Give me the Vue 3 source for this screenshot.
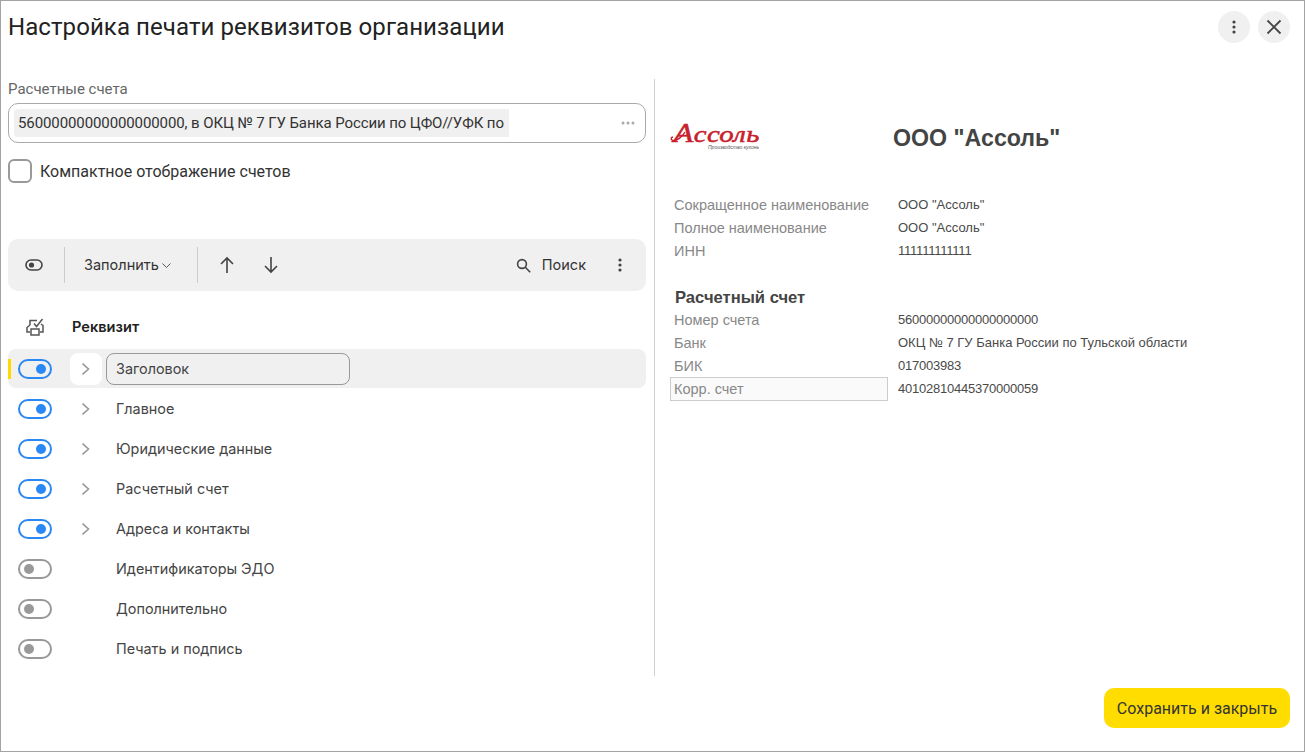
<script setup>
import { ref } from 'vue';

// Реквизиты организации
const rows = ref([
  { name: 'Заголовок', on: true, expand: true, current: true },
  { name: 'Главное', on: true, expand: true },
  { name: 'Юридические данные', on: true, expand: true },
  { name: 'Расчетный счет', on: true, expand: true },
  { name: 'Адреса и контакты', on: true, expand: true },
  { name: 'Идентификаторы ЭДО', on: false },
  { name: 'Дополнительно', on: false },
  { name: 'Печать и подпись', on: false }
]);

const orgInfo = [
  { label: 'Сокращенное наименование', value: 'ООО "Ассоль"' },
  { label: 'Полное наименование', value: 'ООО "Ассоль"' },
  { label: 'ИНН', value: '111111111111', digits: true }
];

const bankInfo = [
  { label: 'Номер счета', value: '56000000000000000000', digits: true },
  { label: 'Банк', value: 'ОКЦ № 7 ГУ Банка России по Тульской области' },
  { label: 'БИК', value: '017003983', digits: true },
  { label: 'Корр. счет', value: '40102810445370000059', digits: true, picked: true }
];
</script>

<template>
  <div class="window">
    <header class="head">
      <h1 class="title">Настройка печати реквизитов организации</h1>
      <div class="head-btns">
        <button class="round-btn" aria-label="Ещё">
          <svg width="16" height="16" viewBox="0 0 16 16"><circle cx="8" cy="3" r="1.6" /><circle cx="8" cy="8" r="1.6" /><circle cx="8" cy="13" r="1.6" /></svg>
        </button>
        <button class="round-btn" aria-label="Закрыть">
          <svg width="16" height="16" viewBox="0 0 16 16" fill="none" stroke="#444" stroke-width="1.8"><path d="M1.5 1.5 14.5 14.5M14.5 1.5 1.5 14.5" /></svg>
        </button>
      </div>
    </header>

    <div class="main">
      <section class="left">
        <div class="field-label">Расчетные счета</div>
        <div class="field">
          <div class="chip">56000000000000000000, в ОКЦ № 7 ГУ Банка России по ЦФО//УФК по</div>
          <svg class="more" width="14" height="4" viewBox="0 0 14 4"><circle cx="2" cy="2" r="1.5" /><circle cx="7" cy="2" r="1.5" /><circle cx="12" cy="2" r="1.5" /></svg>
        </div>
        <label class="check-line">
          <span class="check"></span>
          <span>Компактное отображение счетов</span>
        </label>

        <div class="toolbar">
          <span class="tb-eye">
            <svg width="18" height="12" viewBox="0 0 18 12"><rect x="1" y="1" width="16" height="10" rx="5" fill="none" stroke="#444" stroke-width="1.6" /><circle cx="6.5" cy="6" r="2.6" fill="#444" /></svg>
          </span>
          <span class="tb-sep"></span>
          <span class="tb-fill">
            Заполнить
            <svg width="9" height="5" viewBox="0 0 9 5" fill="none" stroke="#555" stroke-width="1"><path d="M.5.5 4.5 4.5 8.5.5" /></svg>
          </span>
          <span class="tb-sep"></span>
          <span class="tb-arrow">
            <svg width="16" height="18" viewBox="0 0 16 18" fill="none" stroke="#444" stroke-width="1.6"><path d="M8 17V2M2 8 8 2 14 8" /></svg>
          </span>
          <span class="tb-arrow">
            <svg width="16" height="18" viewBox="0 0 16 18" fill="none" stroke="#444" stroke-width="1.6"><path d="M8 1V16M2 10 8 16 14 10" /></svg>
          </span>
          <span class="tb-search">
            <svg width="15" height="15" viewBox="0 0 15 15" fill="none" stroke="#444" stroke-width="1.6"><circle cx="6" cy="6" r="4.4" /><path d="M9.3 9.3 14.2 14.2" /></svg>
            Поиск
          </span>
          <span class="tb-dots">
            <svg width="4" height="14" viewBox="0 0 4 14" fill="#444"><circle cx="2" cy="2" r="1.6" /><circle cx="2" cy="7" r="1.6" /><circle cx="2" cy="12" r="1.6" /></svg>
          </span>
        </div>

        <div class="list-head">
          <svg class="print-ico" width="18" height="18" viewBox="0 0 18 18" fill="none" stroke="#555" stroke-width="1.5">
            <path d="M4 7V2.5H11" />
            <path d="M4 14H1V9.5L4 7M14 14H17V7.5L15 6" />
            <path d="M5 11H13V17H5Z" />
            <path d="M8 5.5 10.5 8.5 16.5 1" />
          </svg>
          <span>Реквизит</span>
        </div>

        <div class="list">
          <div v-for="row in rows" :key="row.name" class="row" :class="{ current: row.current }">
            <span class="toggle" :class="{ on: row.on }"><i></i></span>
            <span class="expander">
              <svg v-if="row.expand" width="8" height="14" viewBox="0 0 8 14" fill="none" stroke="#999" stroke-width="1.6"><path d="M.5 1.5 6.5 7 .5 12.5" /></svg>
            </span>
            <span class="row-name">{{ row.name }}</span>
          </div>
        </div>
      </section>

      <section class="preview">
        <div class="org-head">
          <div class="logo">
            <svg class="logo-curl" width="16" height="12" viewBox="0 0 16 12" fill="none" stroke="#c8202c" stroke-width="1.4"><path d="M15 2C12 7 7 11 3 10.5 .5 10 .5 7.5 3 7" /></svg>
            <div class="logo-name"><span class="logo-cap">А</span>ссоль</div>
            <div class="logo-sub">Производство кухонь</div>
          </div>
          <div class="org-name">ООО "Ассоль"</div>
        </div>

        <div class="info org-info">
          <template v-for="item in orgInfo" :key="item.label">
            <div class="info-label">{{ item.label }}</div>
            <div class="info-value" :class="{ digits: item.digits }">{{ item.value }}</div>
          </template>
        </div>

        <div class="bank-title">Расчетный счет</div>
        <div class="info">
          <template v-for="item in bankInfo" :key="item.label">
            <div class="info-label" :class="{ picked: item.picked }">{{ item.label }}</div>
            <div class="info-value" :class="{ digits: item.digits }">{{ item.value }}</div>
          </template>
        </div>
      </section>
    </div>

    <footer class="foot">
      <button class="save">Сохранить и закрыть</button>
    </footer>
  </div>
</template>

<style>
html, body {
  margin: 0;
  background: #fff;
}
</style>

<style scoped>
.window {
  box-sizing: border-box;
  width: 1305px;
  height: 752px;
  border: 1px solid #a3a3a3;
  display: flex;
  flex-direction: column;
  overflow: hidden;
  background: #fff;
  color: #333;
  font-family: Roboto, "Liberation Sans", sans-serif;
}

.head {
  display: flex;
  align-items: center;
  justify-content: space-between;
  height: 52px;
  padding: 0 14px 0 7px;
  flex: none;
}

.title {
  margin: 0;
  font-size: 24px;
  font-weight: 400;
  letter-spacing: 0.08px;
  color: #222;
}

.head-btns {
  display: flex;
  gap: 8px;
}

.round-btn {
  width: 32px;
  height: 32px;
  border: 0;
  border-radius: 50%;
  background: #f0f0f0;
  padding: 0;
  display: flex;
  align-items: center;
  justify-content: center;
  fill: #444;
}

.main {
  display: flex;
  flex: 1;
  min-height: 0;
  padding-top: 26px;
}

.left {
  box-sizing: border-box;
  width: 654px;
  height: 597px;
  padding: 0 8px 0 7px;
  border-right: 1px solid #d0d0d0;
  flex: none;
}

.field-label {
  font-size: 15px;
  line-height: 20px;
  margin-bottom: 4px;
  color: #666;
}

.field {
  box-sizing: border-box;
  height: 40px;
  border: 1px solid #a9a9a9;
  border-radius: 10px;
  padding: 5px;
  display: flex;
  align-items: center;
  justify-content: space-between;
}

.chip {
  box-sizing: border-box;
  width: 495px;
  height: 28px;
  line-height: 28px;
  padding-left: 4px;
  background: #f0f0f0;
  border-radius: 4px 0 0 4px;
  font-size: 15px;
  letter-spacing: -0.1px;
  white-space: nowrap;
  overflow: hidden;
}

.more {
  fill: #aaa;
  margin-right: 5px;
}

.check-line {
  display: flex;
  align-items: center;
  gap: 8px;
  margin-top: 16px;
  font-size: 16px;
  color: #333;
}

.check {
  box-sizing: border-box;
  width: 24px;
  height: 24px;
  border: 2px solid #999;
  border-radius: 6px;
}

.toolbar {
  box-sizing: border-box;
  display: flex;
  align-items: center;
  height: 52px;
  margin-top: 56px;
  border-radius: 10px;
  background: #f0f0f0;
  font-family: Inter, Roboto, sans-serif;
  font-size: 14.5px;
  line-height: 18px;
}

.tb-eye {
  display: flex;
  margin: 0 21px 0 17px;
}

.tb-sep {
  width: 1px;
  height: 36px;
  background: #ccc;
}

.tb-fill {
  box-sizing: border-box;
  width: 132px;
  display: flex;
  align-items: center;
  gap: 3px;
  padding-left: 19px;
}

.tb-arrow {
  display: flex;
  margin-left: 21px;
  width: 23px;
}

.tb-search {
  display: flex;
  align-items: center;
  gap: 11px;
  margin-left: auto;
}

.tb-dots {
  display: flex;
  margin: 0 24px 0 32px;
}

.list-head {
  box-sizing: border-box;
  display: flex;
  align-items: center;
  height: 58px;
  padding-top: 14px;
  font-family: Inter, Roboto, sans-serif;
  font-size: 14.6px;
  font-weight: 600;
  color: #222;
}

.print-ico {
  margin-left: 18px;
  margin-right: 28px;
}

.row {
  display: flex;
  align-items: center;
  height: 39px;
  margin-bottom: 1px;
  border-radius: 8px;
  font-family: Inter, Roboto, sans-serif;
  font-size: 14.4px;
  position: relative;
  color: #444;
}

.row.current {
  background: #f0f0f0;
}

.row.current::before {
  content: "";
  position: absolute;
  left: 0;
  top: 10px;
  width: 3px;
  height: 20px;
  background: #ffd900;
}

.toggle {
  box-sizing: border-box;
  width: 34px;
  height: 20px;
  margin-left: 10px;
  border: 2px solid #999;
  border-radius: 10px;
  display: flex;
  align-items: center;
  padding: 0 4px;
  flex: none;
}

.toggle i {
  width: 10px;
  height: 10px;
  border-radius: 50%;
  background: #999;
}

.toggle.on {
  border-color: #2a88f5;
  justify-content: flex-end;
}

.toggle.on i {
  background: #2a88f5;
}

.expander {
  box-sizing: border-box;
  width: 32px;
  height: 32px;
  margin-left: 18px;
  border-radius: 8px;
  display: flex;
  align-items: center;
  justify-content: center;
  flex: none;
}

.row.current .expander {
  background: #fff;
}

.row-name {
  box-sizing: border-box;
  width: 244px;
  height: 32px;
  line-height: 30px;
  margin-left: 4px;
  padding-left: 9px;
  border: 1px solid transparent;
  border-radius: 8px;
}

.row.current .row-name {
  border-color: #999;
}

.preview {
  flex: 1;
  padding: 0 0 0 15px;
  font-family: "Liberation Sans", Arial, sans-serif;
}

.org-head {
  display: flex;
  align-items: center;
  height: 60px;
  margin-top: 29px;
}

.logo {
  width: 223px;
  flex: none;
  color: #c8202c;
  padding-bottom: 3px;
  position: relative;
}

.logo-curl {
  position: absolute;
  left: 0;
  top: 6px;
}

.logo-name {
  font-family: "Liberation Serif", serif;
  font-style: italic;
  font-size: 24px;
  line-height: 19px;
  letter-spacing: 0.3px;
  padding-left: 3px;
  transform: scaleX(1.2);
  transform-origin: left;
  -webkit-text-stroke: 0.5px #c8202c;
}

.logo-cap {
  font-size: 27px;
}

.logo-sub {
  font-size: 5px;
  line-height: 6px;
  color: #555;
  padding-left: 38px;
  font-style: italic;
}

.org-name {
  font-size: 23.2px;
  font-weight: 700;
  color: #444;
}

.info {
  display: grid;
  grid-template-columns: 224px 1fr;
  grid-auto-rows: 23px;
  align-items: center;
}

.org-info {
  margin-top: 25px;
}

.info-label {
  font-size: 14.5px;
  color: #888;
  padding-left: 4px;
  line-height: 22px;
}

.info-label.picked {
  box-sizing: border-box;
  width: 218px;
  height: 24px;
  border: 1px solid #ccc;
  background: #fafafa;
  padding-left: 3px;
}

.info-value {
  font-size: 13px;
  color: #4a4a4a;
  padding-left: 4px;
}

.info-value.digits {
  letter-spacing: -0.23px;
}

.bank-title {
  font-size: 16.6px;
  font-weight: 700;
  color: #444;
  padding-left: 5px;
  margin-top: 26px;
  line-height: 20px;
}

.foot {
  display: flex;
  justify-content: flex-end;
  padding: 0 14px 23px 0;
  flex: none;
}

.save {
  width: 186px;
  height: 40px;
  border: 0;
  border-radius: 10px;
  background: #ffdd00;
  color: #333;
  font-family: Roboto, "Liberation Sans", sans-serif;
  font-size: 16px;
  padding: 0;
}
</style>
